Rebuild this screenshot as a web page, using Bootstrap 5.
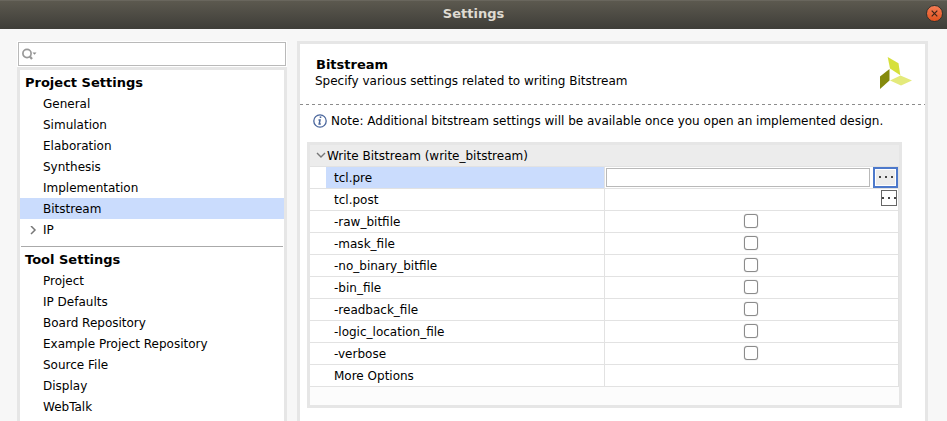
<!DOCTYPE html>
<html lang="en">
<head>
<meta charset="utf-8">
<meta name="viewport" content="width=device-width, initial-scale=1">
<title>Settings</title>
<link href="https://cdn.jsdelivr.net/npm/bootstrap@5.3.0/dist/css/bootstrap.min.css" rel="stylesheet">
<style>
body { font: 12px/21px "DejaVu Sans", sans-serif; color: #000; background: #f7f7f7; }
.titlebar { height: 29px; background: linear-gradient(#5c594f, #3e3d38); color: #dfdbd2; border-top: 1px solid #69665d; }
.titlebar h1 { font-size: 13px; font-weight: 700; line-height: 26px; }
.close-btn { right: 4px; top: 4px; width: 17px; height: 17px; border: 1px solid #33322d; border-radius: 50%; background: linear-gradient(#f47c54, #e2531f); color: #3c2418; }
.close-btn svg { display: block; margin: auto; }
.workspace { padding: 12px 19px 0 17px; gap: 10px; min-height: 0; }
.side { flex: 0 0 270px; }
.search { height: 26px; border: 1px solid #fff; }
.search-inner { border: 1px solid #b9b9b9; padding-left: 3px; }
.search input { outline: 0; font-size: 12px; }
.pane { border: 3px solid #e6e6e6; border-bottom: 0; background: #fff; }
.tree { padding-top: 2px; }
.tree h2 { font-size: 13px; font-weight: 700; line-height: 20px; padding: 1px 0 0 5px; }
.tree a { color: #000; line-height: 19px; padding: 2px 0 0 23px; }
.tree a.selected { background: #cadcfd; }
.tree a.parent { padding-left: 9px; }
.tree hr { margin: 6px 1px 2px; border-top: 1px solid #aaa; opacity: 1; }
.intro { height: 61px; padding: 12px 12px 0 15px; background: repeating-linear-gradient(90deg, #8c8c8c 0 3px, #fff 3px 6px) bottom / 100% 1px no-repeat; }
.intro h2 { font-size: 13px; font-weight: 700; line-height: 17px; padding-left: 1px; }
.intro p { line-height: 16px; }
.note { padding: 5px 13px; gap: 4px; line-height: 21px; }
.note span { padding-top: 1px; line-height: 20px; }
.grid-frame { margin: 6px 23px 0 7px; border: 3px solid #e6e6e6; background: #fcfcfc; padding-bottom: 18px; }
.props { table-layout: fixed; border-collapse: separate; border-spacing: 0; background: #fff; color: #000; }
.props th, .props td { height: 22px; padding: 0; border-bottom: 1px solid #e2e2e2; font-weight: 400; line-height: 20px; }
.props tbody th { border-right: 1px solid #e2e2e2; padding-left: 8px; }
.props tbody td:last-child { border-right: 1px solid #e2e2e2; }
.props thead th { background: #ececec; padding: 1px 0 0 6px; }
.gutter { width: 16px; }
.name-col { width: 47.3%; }
.props .selected th { background: #cadcfd; }
.path-cell { padding-left: 1px; gap: 3px; }
.path { height: 19px; border: 1px solid #b9b9b9; min-width: 0; }
.more { background: #fff; border: 1px solid #666; width: 16px; height: 16px; }
.more.focused { background: #ececec; border: 2px solid #4d79cb; width: 25px; height: 21px; box-shadow: inset 0 0 0 1px #fff; }
.more svg { display: block; margin: auto; }
.post-cell { padding: 0 1px 3px 0; }
.tick { appearance: none; width: 14px; height: 14px; margin-bottom: 2px; border: 1px solid #8b8b8b; border-radius: 3px; background: #fff; box-shadow: 0 0 1px #999; }
.tick:checked { background: #4d79cb; }
</style>
<script src="https://cdn.jsdelivr.net/npm/bootstrap@5.3.0/dist/js/bootstrap.bundle.min.js"></script>
</head>
<body class="vh-100 d-flex flex-column overflow-hidden">
<header class="titlebar position-relative text-center flex-shrink-0">
  <h1 class="m-0">Settings</h1>
  <button type="button" class="close-btn position-absolute p-0" aria-label="Close"><svg width="9" height="9" viewBox="0 0 9 9"><path d="M1.7 1.7l5.6 5.6M7.3 1.7L1.7 7.3" stroke="currentColor" stroke-width="1.2"/></svg></button>
</header>
<main class="workspace d-flex flex-grow-1">
  <div class="side d-flex flex-column">
    <div class="search flex-shrink-0 d-flex bg-white">
      <label class="search-inner d-flex align-items-center flex-grow-1">
        <svg width="15" height="12" viewBox="0 0 15 12" fill="none" stroke="#999"><circle cx="5" cy="5.5" r="4.1" stroke-width="1.7"/><path d="M7.5 8L10 11" stroke-width="2.2"/><path d="M10.5 4.5h4l-2 2.2z" fill="#8c8c8c" stroke="none"/></svg>
        <input type="text" class="border-0 p-0 flex-grow-1 bg-transparent" aria-label="Search settings">
      </label>
    </div>
    <nav class="pane tree flex-grow-1 overflow-hidden">
      <h2 class="m-0">Project Settings</h2>
      <a class="d-block text-decoration-none" href="#">General</a>
      <a class="d-block text-decoration-none" href="#">Simulation</a>
      <a class="d-block text-decoration-none" href="#">Elaboration</a>
      <a class="d-block text-decoration-none" href="#">Synthesis</a>
      <a class="d-block text-decoration-none" href="#">Implementation</a>
      <a class="d-block text-decoration-none selected" href="#" aria-current="page">Bitstream</a>
      <a class="d-flex align-items-center text-decoration-none parent" href="#"><svg width="14" height="10" viewBox="0 0 14 10" fill="none"><path d="M2 0l4 4-4 4" stroke="#777" stroke-width="1.5"/></svg>IP</a>
      <hr>
      <h2 class="m-0">Tool Settings</h2>
      <a class="d-block text-decoration-none" href="#">Project</a>
      <a class="d-block text-decoration-none" href="#">IP Defaults</a>
      <a class="d-block text-decoration-none" href="#">Board Repository</a>
      <a class="d-block text-decoration-none" href="#">Example Project Repository</a>
      <a class="d-block text-decoration-none" href="#">Source File</a>
      <a class="d-block text-decoration-none" href="#">Display</a>
      <a class="d-block text-decoration-none" href="#">WebTalk</a>
    </nav>
  </div>
  <section class="pane flex-grow-1 overflow-hidden">
    <div class="intro d-flex justify-content-between">
      <div>
        <h2 class="m-0">Bitstream</h2>
        <p class="m-0">Specify various settings related to writing Bitstream</p>
      </div>
      <svg width="33" height="34" viewBox="0 -1 33 34" aria-hidden="true"><path d="M7.7 0L18.5 6.3 20.3 18.3 10 11.5z" fill="#d6e03a"/><path d="M0 19.5L9.5 12v11.5L0 32z" fill="#858a0c"/><path d="M10 23.5l10.5-5 11.5 5-11 5z" fill="#e4ea7b"/></svg>
    </div>
    <div class="note d-flex align-items-center">
      <svg class="flex-shrink-0" width="14" height="14" viewBox="0 0 14 14" fill="none" stroke="#4a669c"><circle cx="7" cy="7" r="6.2" stroke-width="1.3"/><path d="M5.5 6H7l-.8 4h1.6" stroke-width="1.5"/><path d="M6.7 3.2h1.6" stroke-width="1.6"/></svg>
      <span>Note: Additional bitstream settings will be available once you open an implemented design.</span>
    </div>
    <div class="grid-frame">
      <table class="props w-100">
        <colgroup><col class="gutter"><col class="name-col"><col></colgroup>
        <thead><tr><th colspan="3"><span class="d-flex align-items-center"><svg width="11" height="8" viewBox="0 0 11 8" fill="none"><path d="M1 1l4 4 4-4" stroke="#777" stroke-width="1.4"/></svg>Write Bitstream (write_bitstream)</span></th></tr></thead>
        <tbody>
          <tr class="selected"><td></td><th scope="row"><label for="pre">tcl.pre</label></th><td><div class="path-cell d-flex align-items-center"><input id="pre" type="text" class="path flex-grow-1"><button type="button" class="more focused p-0" aria-label="Browse tcl.pre"><svg width="14" height="3" viewBox="0 0 14 3" fill="#444"><path d="M0 0h2v2H0zM6 0h2v2H6zM12 0h2v2h-2z"/></svg></button></div></td></tr>
          <tr><td></td><th scope="row">tcl.post</th><td><div class="post-cell d-flex justify-content-end"><button type="button" class="more p-0" aria-label="Browse tcl.post"><svg width="14" height="3" viewBox="0 0 14 3" fill="#444"><path d="M0 0h2v2H0zM6 0h2v2H6zM12 0h2v2h-2z"/></svg></button></div></td></tr>
          <tr><td></td><th scope="row"><label for="raw">-raw_bitfile</label></th><td><input id="raw" class="tick d-block mx-auto" type="checkbox"></td></tr>
          <tr><td></td><th scope="row"><label for="mask">-mask_file</label></th><td><input id="mask" class="tick d-block mx-auto" type="checkbox"></td></tr>
          <tr><td></td><th scope="row"><label for="nobin">-no_binary_bitfile</label></th><td><input id="nobin" class="tick d-block mx-auto" type="checkbox"></td></tr>
          <tr><td></td><th scope="row"><label for="bin">-bin_file</label></th><td><input id="bin" class="tick d-block mx-auto" type="checkbox"></td></tr>
          <tr><td></td><th scope="row"><label for="readback">-readback_file</label></th><td><input id="readback" class="tick d-block mx-auto" type="checkbox"></td></tr>
          <tr><td></td><th scope="row"><label for="logic">-logic_location_file</label></th><td><input id="logic" class="tick d-block mx-auto" type="checkbox"></td></tr>
          <tr><td></td><th scope="row"><label for="verbose">-verbose</label></th><td><input id="verbose" class="tick d-block mx-auto" type="checkbox"></td></tr>
          <tr><td></td><th scope="row">More Options</th><td></td></tr>
        </tbody>
      </table>
    </div>
  </section>
</main>
</body>
</html>
